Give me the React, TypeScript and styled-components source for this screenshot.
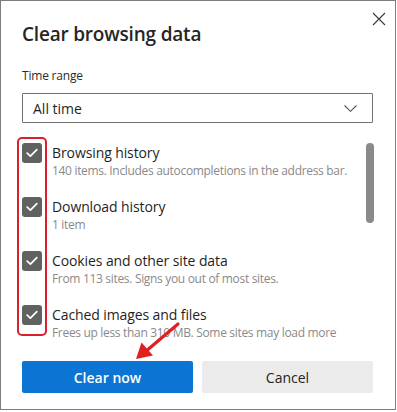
import { FC } from 'react';
import { styled, createGlobalStyle } from 'styled-components';

const GlobalStyle = createGlobalStyle`
    body {
        margin: 0;
        background: #ffffff;
        font-family: "Open Sans", "Noto Sans", Arial, sans-serif;
        color: #1b1b1b;
    }
`;

const Dialog = styled.div`
    position: relative;
    box-sizing: border-box;
    width: 396px;
    height: 410px;
    border: 1px solid #7d7d7d;
    padding: 19px 22px 0 21px;
    display: flex;
    flex-direction: column;
    overflow: hidden;
`;

const Header = styled.div`
    display: flex;
    justify-content: space-between;
    align-items: flex-start;
`;

const Title = styled.h1`
    margin: 0;
    font-size: 19px;
    line-height: 28px;
    font-weight: 600;
    letter-spacing: -0.2px;
    color: #262626;
`;

const CloseButton = styled.button`
    border: none;
    background: none;
    padding: 0;
    width: 16px;
    height: 16px;
    margin: -9px -14px 0 0;
    display: flex;
    align-items: center;
    justify-content: center;
`;

const Label = styled.div`
    margin-top: 20px;
    font-size: 12px;
    line-height: 16px;
    letter-spacing: -0.2px;
    color: #2b2b2b;
`;

const Select = styled.div`
    margin-top: 9px;
    box-sizing: border-box;
    height: 30px;
    border: 1px solid #707070;
    border-radius: 1px;
    padding: 0 15px 0 10px;
    display: flex;
    align-items: center;
    justify-content: space-between;
    font-size: 14px;
    color: #1f1f1f;
`;

const List = styled.div`
    margin-top: 14px;
    height: 208px;
    display: grid;
    grid-template-columns: 1fr 8px;
    margin-right: -1px;
    overflow: hidden;
`;

const Items = styled.div`
    padding-top: 6px;
    display: flex;
    flex-direction: column;
    gap: 18px;
`;

const Item = styled.div`
    display: flex;
    gap: 10px;
    align-items: flex-start;
`;

const Checkbox = styled.span`
    flex: none;
    width: 20px;
    height: 20px;
    border-radius: 3px;
    background: #616161;
    display: flex;
    align-items: center;
    justify-content: center;
`;

const ItemText = styled.div`
    display: flex;
    flex-direction: column;
    white-space: nowrap;
`;

const ItemTitle = styled.span`
    font-size: 14px;
    line-height: 20px;
    letter-spacing: -0.1px;
    color: #1f1f1f;
`;

const ItemSub = styled.span`
    font-size: 12px;
    line-height: 16px;
    letter-spacing: -0.32px;
    color: #8a8a8a;
`;

const ScrollThumb = styled.div`
    margin-top: 6px;
    height: 80px;
    border-radius: 4px;
    background: #8a8a8a;
`;

const Buttons = styled.div`
    margin-top: 16px;
    display: flex;
    gap: 9px;
`;

const Button = styled.button<{ $primary?: boolean }>`
    flex: 1;
    height: 32px;
    border: none;
    border-radius: 2px;
    font-family: inherit;
    font-size: 14px;
    font-weight: ${p => (p.$primary ? 600 : 400)};
    background: ${p => (p.$primary ? '#0c74d2' : '#ebebeb')};
    color: ${p => (p.$primary ? '#ffffff' : '#242424')};
`;

const Highlight = styled.div`
    position: absolute;
    left: 16px;
    top: 136px;
    width: 30px;
    height: 199px;
    box-sizing: border-box;
    border: 2px solid #d9202c;
    border-radius: 5px;
    pointer-events: none;
`;

const Arrow = styled.svg`
    position: absolute;
    left: 0;
    top: 0;
    pointer-events: none;
`;

const items = [
    { title: 'Browsing history', sub: '140 items. Includes autocompletions in the address bar.' },
    { title: 'Download history', sub: '1 item' },
    { title: 'Cookies and other site data', sub: 'From 113 sites. Signs you out of most sites.' },
    { title: 'Cached images and files', sub: 'Frees up less than 310 MB. Some sites may load more' },
    { title: 'Passwords', sub: 'None' },
];

const Check: FC = () => (
    <svg width="12" height="10" viewBox="0 0 12 10">
        <path d="M1.2 5.2 L4.4 8.2 L10.8 1.6" fill="none" stroke="#fff" strokeWidth="1.7" strokeLinecap="round" strokeLinejoin="round" />
    </svg>
);

const App: FC = () => {
    return (
        <>
            <GlobalStyle />
            <Dialog>
                <Header>
                    <Title>Clear browsing data</Title>
                    <CloseButton aria-label="Close">
                        <svg width="14" height="14" viewBox="0 0 14 14">
                            <path d="M1 1 L13 13 M13 1 L1 13" stroke="#3a3a3a" strokeWidth="1.1" />
                        </svg>
                    </CloseButton>
                </Header>
                <Label>Time range</Label>
                <Select>
                    <span>All time</span>
                    <svg width="13" height="7" viewBox="0 0 13 7">
                        <path d="M0.5 0.5 L6.5 6.3 L12.5 0.5" fill="none" stroke="#555" strokeWidth="1.1" />
                    </svg>
                </Select>
                <List>
                    <Items>
                        {items.map(it => (
                            <Item key={it.title}>
                                <Checkbox><Check /></Checkbox>
                                <ItemText>
                                    <ItemTitle>{it.title}</ItemTitle>
                                    <ItemSub>{it.sub}</ItemSub>
                                </ItemText>
                            </Item>
                        ))}
                    </Items>
                    <ScrollThumb />
                </List>
                <Buttons>
                    <Button $primary>Clear now</Button>
                    <Button>Cancel</Button>
                </Buttons>
                <Highlight />
                <Arrow width="396" height="410" viewBox="0 0 396 410">
                    <line x1="177" y1="323" x2="144" y2="351" stroke="#e0201f" strokeWidth="3.2" strokeLinecap="round" />
                    <polygon points="135,358 140.5,341.5 152,354.5" fill="#e0201f" />
                </Arrow>
            </Dialog>
        </>
    );
};

export default App;
